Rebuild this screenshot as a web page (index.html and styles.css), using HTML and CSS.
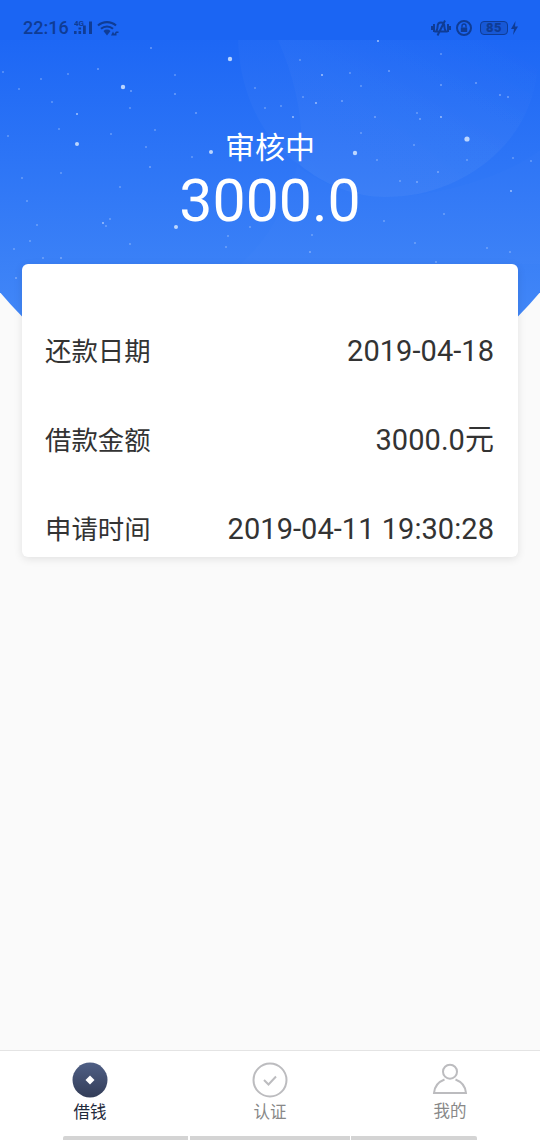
FILE: index.html
```html
<!DOCTYPE html>
<html lang="zh">
<head>
<meta charset="utf-8">
<title>审核中</title>
<link rel="stylesheet" href="styles.css">
</head>
<body>
<div class="page">
  <div class="hero-bg">
    <svg class="hero-art" width="540" height="320" viewBox="0 0 540 320">
      <defs>
        <linearGradient id="fade" x1="0.1" y1="1" x2="1" y2="0.1">
          <stop offset="0" stop-color="#fff" stop-opacity=".028"/>
          <stop offset=".55" stop-color="#fff" stop-opacity=".02"/>
          <stop offset="1" stop-color="#fff" stop-opacity="0"/>
        </linearGradient>
      </defs>
      <path fill="url(#fade)" d="M238 40C240 100 268 145 300 165C325 185 355 197 385 197C430 197 470 180 500 150C525 125 540 90 540 40Z"/>
      <path fill="url(#fade)" d="M278 40C298 85 305 130 300 165C325 185 355 197 385 197C430 197 470 180 500 150C525 125 540 90 540 40Z"/>
      <path class="blob2" d="M297 166C286 208 266 242 240 264H540V150C500 180 430 197 385 197C355 197 325 185 297 166Z"/>
      <g class="star-big">
        <circle cx="230" cy="59" r="2.2"/><circle cx="123" cy="87" r="2.2"/><circle cx="77" cy="144" r="2"/>
        <circle cx="211" cy="152" r="2"/><circle cx="355" cy="153" r="2.2"/><circle cx="467" cy="139" r="2.6"/>
        <circle cx="176" cy="227" r="2"/>
      </g>
      <g class="star-small">
        <circle cx="151" cy="48" r=".8"/><circle cx="378" cy="41" r="1"/><circle cx="441" cy="54" r=".7"/><circle cx="300" cy="60" r=".7"/>
        <circle cx="98" cy="69" r=".8"/><circle cx="68" cy="74" r=".7"/><circle cx="175" cy="75" r=".7"/><circle cx="322" cy="75" r="1"/>
        <circle cx="350" cy="73" r=".7"/><circle cx="389" cy="71" r=".8"/><circle cx="41" cy="79" r=".7"/><circle cx="3" cy="72" r=".7"/>
        <circle cx="476" cy="83" r=".8"/><circle cx="441" cy="85" r=".8"/><circle cx="361" cy="86" r=".7"/><circle cx="131" cy="91" r=".8"/>
        <circle cx="19" cy="89" r=".7"/><circle cx="175" cy="94" r=".8"/><circle cx="255" cy="88" r=".7"/><circle cx="500" cy="95" r=".8"/>
        <circle cx="508" cy="97" r=".8"/><circle cx="303" cy="97" r=".7"/><circle cx="342" cy="101" r=".8"/><circle cx="316" cy="103" r=".9"/>
        <circle cx="52" cy="102" r=".7"/><circle cx="130" cy="108" r=".7"/><circle cx="265" cy="108" r=".7"/><circle cx="281" cy="106" r=".7"/>
        <circle cx="77" cy="114" r="1"/><circle cx="196" cy="113" r=".8"/><circle cx="375" cy="117" r=".8"/><circle cx="417" cy="113" r=".7"/>
        <circle cx="293" cy="117" r=".9"/><circle cx="420" cy="119" r=".8"/><circle cx="441" cy="117" r=".9"/><circle cx="59" cy="129" r=".7"/>
        <circle cx="155" cy="130" r=".7"/><circle cx="111" cy="134" r=".7"/><circle cx="8" cy="136" r=".7"/><circle cx="361" cy="133" r=".7"/>
        <circle cx="414" cy="145" r=".7"/><circle cx="146" cy="147" r=".7"/><circle cx="377" cy="160" r=".7"/><circle cx="467" cy="160" r=".7"/>
        <circle cx="513" cy="158" r=".7"/><circle cx="531" cy="161" r=".7"/><circle cx="192" cy="157" r=".7"/><circle cx="150" cy="167" r=".8"/>
        <circle cx="61" cy="173" r=".7"/><circle cx="22" cy="178" r=".7"/><circle cx="438" cy="172" r=".8"/><circle cx="400" cy="181" r=".7"/>
        <circle cx="417" cy="182" r=".8"/><circle cx="120" cy="187" r=".7"/><circle cx="511" cy="191" r=".9"/><circle cx="27" cy="201" r=".7"/>
        <circle cx="444" cy="214" r=".7"/><circle cx="384" cy="221" r=".7"/><circle cx="37" cy="225" r=".7"/><circle cx="103" cy="223" r=".9"/>
        <circle cx="110" cy="219" r=".7"/><circle cx="106" cy="226" r=".7"/><circle cx="250" cy="227" r=".7"/><circle cx="312" cy="235" r=".7"/>
        <circle cx="228" cy="236" r=".7"/><circle cx="30" cy="241" r=".7"/><circle cx="415" cy="243" r=".7"/><circle cx="130" cy="244" r=".7"/>
        <circle cx="226" cy="247" r=".7"/><circle cx="487" cy="248" r=".7"/><circle cx="14" cy="249" r=".7"/><circle cx="510" cy="252" r=".7"/>
        <circle cx="310" cy="252" r=".8"/><circle cx="43" cy="258" r=".7"/><circle cx="61" cy="258" r=".8"/><circle cx="436" cy="262" r=".7"/>
        <circle cx="16" cy="278" r=".8"/>
      </g>
    </svg>
  </div>

  <header class="hero">
    <div class="status">
      <div class="status-group">
        <span class="time">22:16</span>
        <svg class="ic" width="46" height="18" viewBox="0 0 46 18">
          <text class="net" x="0" y="7">4G</text>
          <path d="M0 12h2.600v3H0zM4.500 12h2.600v3H4.500zM4.500 8.500h2.600v2H4.500zM9 6.500h2.800V15H9zM15 2.500h3V15h-3z"/>
          <path class="wifi" d="M24 6.500a13.500 13.500 0 0 1 18 0M27 9.800a9 9 0 0 1 12 0"/>
          <path d="M29.500 12a5 5 0 0 1 7 0L33 16.500z"/>
          <path d="M37 16.500l2-4 1.200 2.400 1.800-2.400h2.500v1.500h-2v2.500z"/>
        </svg>
      </div>
      <div class="status-group right">
        <svg class="ic" width="20" height="18" viewBox="0 0 20 18">
          <path class="line" d="M10 3.500c-2.600 0-3.400 2-3.400 4.200 0 2.600-1 3.800-1.600 4.800h10c-.6-1-1.600-2.200-1.600-4.800 0-2.200-.8-4.200-3.400-4.200zM14 1.500 6.500 16.500M3 5v8M1 7v4M17 5v8M19 7v4"/>
        </svg>
        <svg class="ic lock" width="16" height="16" viewBox="0 0 16 16">
          <circle class="line" cx="8" cy="8" r="7"/>
          <path d="M4.800 7.500h6.400v4.500H4.800z"/>
          <path class="line thin" d="M6 7.500V6a2 2 0 0 1 4 0v1.500"/>
        </svg>
        <span class="battery">85</span>
        <svg class="ic bolt" width="7" height="14" viewBox="0 0 7 14"><path d="M4.500 0 0 8h3L2 14l5-8.500H4z"/></svg>
      </div>
    </div>
    <div class="state">审核中</div>
    <div class="amount">3000.0</div>
  </header>

  <section class="card">
    <div class="row"><span class="label">还款日期</span><span class="value">2019-04-18</span></div>
    <div class="row"><span class="label">借款金额</span><span class="value">3000.0元</span></div>
    <div class="row"><span class="label">申请时间</span><span class="value">2019-04-11 19:30:28</span></div>
  </section>

  <nav class="tabs">
    <div class="tab active">
      <svg width="36" height="36" viewBox="0 0 36 36">
        <defs><linearGradient id="coin" x1="0" y1="0" x2="0" y2="1"><stop offset="0" stop-color="#4f5f85"/><stop offset="1" stop-color="#333d58"/></linearGradient></defs>
        <circle cx="18" cy="18" r="17.500" fill="url(#coin)"/>
        <path d="M18 13.500l4.500 4.500-4.500 4.500-4.500-4.500z" fill="#fff"/>
      </svg>
      <span>借钱</span>
    </div>
    <div class="tab">
      <svg width="36" height="36" viewBox="0 0 36 36" class="tab-line">
        <circle cx="18" cy="18" r="16.500"/>
        <path d="M12 18l4.500 4.500 7.500-8"/>
      </svg>
      <span>认证</span>
    </div>
    <div class="tab me">
      <svg width="36" height="36" viewBox="0 0 36 36" class="tab-line">
        <circle cx="18" cy="9.700" r="7"/>
        <path d="M12.500 17.500C6 20 2.500 24.500 2 31h32c-.5-6.500-4-11-10.500-13.500"/>
      </svg>
      <span>我的</span>
    </div>
  </nav>
  <div class="home-bar"><i class="seg-a"></i><i class="seg-b"></i><i class="seg-c"></i></div>
</div>
</body>
</html>
```

FILE: styles.css
```css
* { box-sizing: border-box; }
html, body { margin: 0; padding: 0; }
body { font-family: Roboto, "Noto Sans CJK SC", sans-serif; background: #fafafa; }

.page {
  position: relative;
  width: 540px;
  height: 1140px;
  overflow: hidden;
  display: flex;
  flex-direction: column;
  background: #fafafa;
}

.hero-bg {
  position: absolute;
  left: 0;
  top: 0;
  width: 540px;
  height: 420px;
  background: linear-gradient(180deg, #1a64f4 0, #1d67f5 40px, #4287f7 320px);
  clip-path: ellipse(351px 351px at 270px 68px);
}
.hero-art { position: absolute; left: 0; top: 0; }
.blob2 { fill: #fff; opacity: .01; }
.star-big circle { fill: #d5e6ff; opacity: .85; }
.star-small circle { fill: #dbe8ff; opacity: .7; }

.hero {
  position: relative;
  height: 264px;
  display: flex;
  flex-direction: column;
  align-items: center;
  flex: none;
}

.status {
  width: 100%;
  height: 40px;
  padding: 16px 22px 0 23px;
  display: flex;
  justify-content: space-between;
  align-items: center;
  color: #0f3c95;
  background: #1b65f3;
}
.status-group { display: flex; align-items: center; }
.time { font-size: 18px; font-weight: 500; line-height: 20px; margin-right: 5px; }
.ic { display: block; fill: #0f3c95; }
.net { font: 700 8px Roboto, sans-serif; fill: #0f3c95; }
.wifi { fill: none; stroke: #0f3c95; stroke-width: 2.200; }
.line { fill: none; stroke: #0f3c95; stroke-width: 2; }
.thin { stroke-width: 1.400; }
.lock { margin: 0 8px 0 5px; }
.battery {
  width: 28px;
  height: 14px;
  border: 1.500px solid #0f3c95;
  border-radius: 4px;
  background: rgba(15, 60, 149, .3);
  font-size: 13px;
  line-height: 11px;
  font-weight: 900;
  text-align: center;
  letter-spacing: .5px;
}
.bolt { margin-left: 3px; }

.state {
  margin-top: 85px;
  font-size: 30px;
  line-height: 40px;
  color: #fff;
  font-family: "Noto Sans CJK SC", sans-serif;
}
.amount {
  margin-top: 3px;
  font-size: 59px;
  line-height: 66px;
  color: #fff;
}

.card {
  position: relative;
  flex: none;
  margin: 0 22px;
  height: 293px;
  padding-top: 42px;
  overflow: hidden;
  background: #fff;
  border-radius: 6px;
  box-shadow: 0 2px 8px rgba(0, 0, 0, .1);
}
.row {
  height: 89px;
  padding: 0 24px 0 23px;
  display: flex;
  justify-content: space-between;
  align-items: center;
  color: #333;
}
.label { font-size: 26.400px; line-height: 36px; padding-bottom: 2px; font-family: "Noto Sans CJK SC", sans-serif; }
.value { font-size: 29px; line-height: 36px; letter-spacing: .05px; }

.tabs {
  margin-top: auto;
  flex: none;
  height: 86px;
  display: grid;
  grid-template-columns: repeat(3, 1fr);
  background: #fff;
  border-top: 1px solid #e4e4e4;
}
.tab {
  display: flex;
  flex-direction: column;
  align-items: center;
  padding-top: 11px;
  color: #888;
  font-size: 16.500px;
  line-height: 24px;
  font-family: "Noto Sans CJK SC", sans-serif;
}
.tab.active { color: #1f2a3c; }
.tab span { margin-top: 1px; }
.tab.me span { margin-top: 0; }
.tab-line { fill: none; stroke: #bcbcbf; stroke-width: 2; }

.home-bar {
  flex: none;
  height: 4px;
  display: flex;
  padding-left: 63px;
  background: #fff;
}
.home-bar i { display: block; height: 4px; background: #d4d4d4; }
.seg-a { width: 125px; border-radius: 2px 0 0 0; margin-right: 2px; }
.seg-b { width: 160px; margin-right: 1px; }
.seg-c { width: 126px; border-radius: 0 2px 0 0; }
```
